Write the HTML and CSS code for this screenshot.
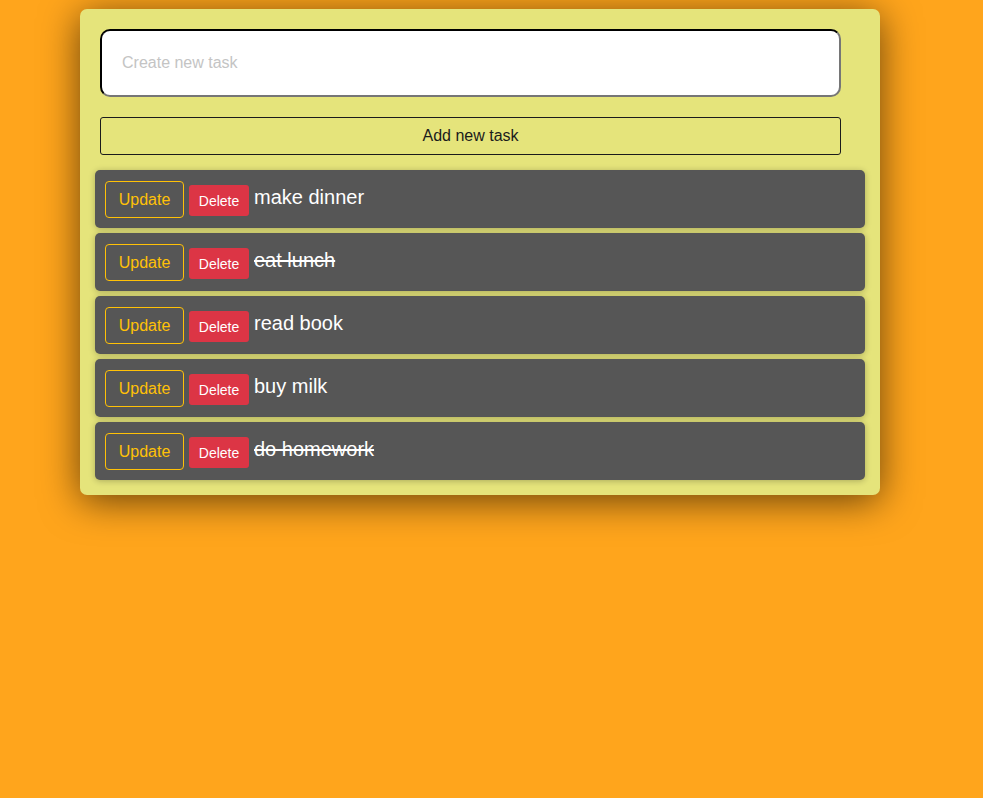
FILE: index.html
```html
<!DOCTYPE html>
<html>
<head>
<meta charset="utf-8">
<link rel="stylesheet" href="styles.css">
</head>
<body>
<div class="card">
  <input class="task-input" type="text" placeholder="Create new task">
  <button class="add-btn">Add new task</button>
  <div class="list">
    <div class="row"><button class="btn-update">Update</button><button class="btn-delete">Delete</button><span class="task">make dinner</span></div>
    <div class="row"><button class="btn-update">Update</button><button class="btn-delete">Delete</button><span class="task done">eat lunch</span></div>
    <div class="row"><button class="btn-update">Update</button><button class="btn-delete">Delete</button><span class="task">read book</span></div>
    <div class="row"><button class="btn-update">Update</button><button class="btn-delete">Delete</button><span class="task">buy milk</span></div>
    <div class="row"><button class="btn-update">Update</button><button class="btn-delete">Delete</button><span class="task done">do homework</span></div>
  </div>
</div>
</body>
</html>
```

FILE: styles.css
```css
html, body {
  margin: 0;
  padding: 0;
  background: #ffa51c;
  font-family: "Liberation Sans", Arial, sans-serif;
}
body {
  padding: 9px 0 0 80px;
  height: 789px;
}
.card {
  width: 800px;
  box-sizing: border-box;
  background: #e5e47b;
  border-radius: 7px;
  box-shadow: 0 6px 38px rgba(0, 0, 0, 0.6);
  padding: 20px 15px 15px 15px;
}
.task-input {
  display: block;
  box-sizing: border-box;
  width: 741px;
  height: 68px;
  margin-left: 5px;
  border: 2px inset #767676;
  border-top-color: #1a1a1a;
  border-left-color: #1a1a1a;
  border-radius: 10px;
  background: #fff;
  padding: 0 20px;
  font-size: 16px;
  font-family: "Liberation Sans", Arial, sans-serif;
  outline: none;
}
.task-input::placeholder {
  color: #c4c4c4;
}
.add-btn {
  display: block;
  box-sizing: border-box;
  width: 741px;
  height: 38px;
  margin: 20px 0 15px 5px;
  background: #e5e47b;
  border: 1px solid #1b1b1b;
  border-radius: 3px;
  font-size: 16px;
  color: #1b1b1b;
  font-family: "Liberation Sans", Arial, sans-serif;
}
.list {
  display: flex;
  flex-direction: column;
  gap: 5px;
}
.row {
  display: flex;
  align-items: center;
  height: 58px;
  box-sizing: border-box;
  padding: 0 10px;
  background: #565656;
  border-radius: 5px;
  box-shadow: 0 1px 6px rgba(0, 0, 0, 0.25);
}
.btn-update {
  box-sizing: border-box;
  height: 37px;
  width: 79px;
  background: transparent;
  border: 1px solid #ffc107;
  border-radius: 4px;
  color: #ffc107;
  font-size: 16px;
  font-family: "Liberation Sans", Arial, sans-serif;
  padding: 0;
  margin-top: 1px;
}
.btn-delete {
  box-sizing: border-box;
  height: 31px;
  width: 60px;
  margin: 3px 5px 0 5px;
  background: #dc3545;
  border: none;
  border-radius: 3px;
  color: #fff;
  font-size: 14px;
  font-family: "Liberation Sans", Arial, sans-serif;
  padding: 0;
}
.task {
  color: #fff;
  font-size: 20px;
  line-height: 30px;
  margin-bottom: 4px;
}
.done {
  text-decoration: line-through;
}
```
